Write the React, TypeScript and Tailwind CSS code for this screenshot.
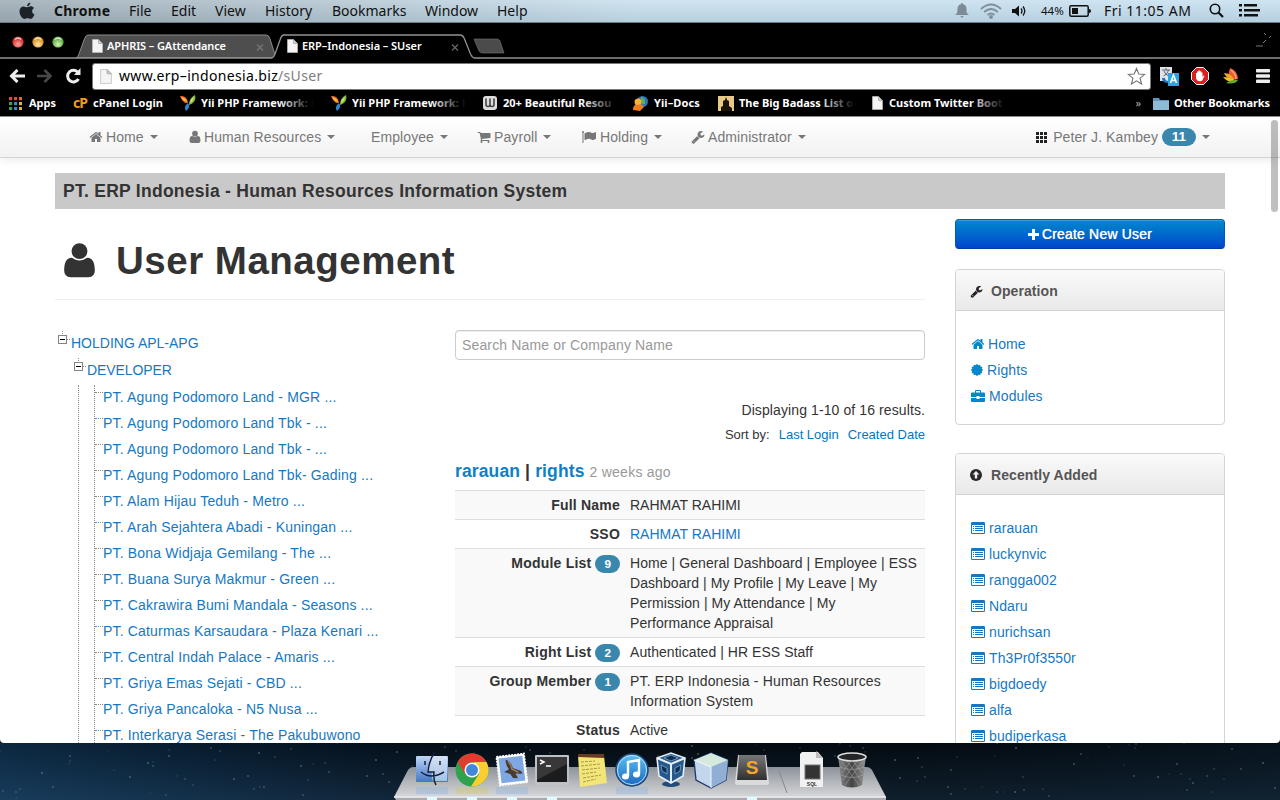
import type { ReactNode } from "react";

const PATHS = {
  home: "M1472 992v480q0 26-19 45t-45 19h-384v-384h-256v384h-384q-26 0-45-19t-19-45v-480q0-1 .5-3t.5-3l575-474 575 474q1 2 1 6zm223-69l-62 74q-8 9-21 11h-3q-13 0-21-7l-692-577-692 577q-12 8-24 7-13-2-21-11l-62-74q-8-10-7-23.5t11-21.5l719-599q32-26 76-26t76 26l244 204v-195q0-14 9-23t23-9h192q14 0 23 9t9 23v408l219 182q10 8 11 21.5t-7 23.5z",
  user: "M896 896Q1060 896 1184 800Q1215 768 1260 768C1500 768 1600 1000 1600 1360Q1600 1664 1310 1664H482Q192 1664 192 1360C192 1000 292 768 532 768Q577 768 608 800Q732 896 896 896zM896 100A365 365 0 0 1 896 830A365 365 0 0 1 896 100z",
  cart: "M704 1536q0 52-38 90t-90 38-90-38-38-90 38-90 90-38 90 38 38 90zm896 0q0 52-38 90t-90 38-90-38-38-90 38-90 90-38 90 38 38 90zm128-1088v512q0 24-16.500 42.500t-40.500 21.500l-1044 122q13 60 13 70 0 16-24 64h920q26 0 45 19t19 45-19 45-45 19h-1024q-26 0-45-19t-19-45q0-11 8-31.500t16-36 21.500-40 15.500-29.500l-177-823h-204q-26 0-45-19t-19-45 19-45 45-19h256q16 0 28.500 6.500t19.500 15.500 13 24.500 8 26 5.500 29.500 4.500 26h1201q26 0 45 19t19 45z",
  wrench: "M448 1472q0-26-19-45t-45-19-45 19-19 45 19 45 45 19 45-19 19-45zm644-420l-682 682q-37 37-90 37-52 0-91-37l-106-108q-38-36-38-90 0-53 38-91l681-681q39 98 114.500 173.500t173.500 114.500zm634-435q0 39-23 106-47 134-164.500 217.500t-258.500 83.500q-185 0-316.500-131.500t-131.500-316.500 131.500-316.500 316.500-131.500q58 0 121.500 16.500t107.500 46.500q16 11 16 28t-16 28l-293 169v224l193 107q5-3 79-48.500t135.500-81 70.500-35.500q15 0 23.500 10t8.500 25z",
  flag: "M256 256q0 72-64 110v1266q0 13-9.500 22.500t-22.500 9.500h-64q-13 0-22.500-9.500t-9.500-22.500v-1266q-64-38-64-110 0-53 37.500-90.500t90.500-37.500 90.500 37.500 37.500 90.500zm1536 64v763q0 25-12.500 38.500t-39.500 27.500q-215 116-369 116-61 0-123.500-22t-108.500-48-115.500-48-142.500-22q-192 0-464 146-17 9-33 9-26 0-45-19t-19-45v-742q0-32 31-55 21-14 79-43 236-120 421-120 107 0 200 29t219 88q38 19 88 19 54 0 117.500-21t110-47 88-47 54.500-21q26 0 45 19t19 45z",
};

function Glyph({ name, className }: { name: keyof typeof PATHS; className: string }) {
  return (
    <svg viewBox="0 0 1792 1792" fill="currentColor" className={`shrink-0 ${className}`}>
      <path d={PATHS[name]} />
    </svg>
  );
}

function ListIcon() {
  return (
    <svg viewBox="0 0 14 12" className="h-3 w-3.5 shrink-0" fill="currentColor">
      <path fillRule="evenodd" d="M1.200 0h11.600Q14 0 14 1.200v9.600Q14 12 12.800 12H1.200Q0 12 0 10.800V1.200Q0 0 1.200 0zM1 3v7.500q0 .5.5.5h11q.5 0 .5-.5V3z" />
      <path d="M2 4h1v1H2zM4 4h8v1H4zM2 6h1v1H2zM4 6h8v1H4zM2 8h1v1H2zM4 8h8v1H4z" />
    </svg>
  );
}

function GearBadge() {
  const points = Array.from({ length: 24 }, (_, i) => {
    const r = i % 2 ? 4.9 : 6.2;
    const a = (i * Math.PI) / 12;
    return `${6 + r * Math.sin(a)},${6 - r * Math.cos(a)}`;
  }).join(" ");
  return (
    <svg viewBox="0 0 12 12" className="h-3 w-3 shrink-0" fill="currentColor">
      <polygon points={points} />
    </svg>
  );
}

function Briefcase() {
  return (
    <svg viewBox="0 0 14 13" className="h-[13px] w-3.5 shrink-0" fill="currentColor">
      <path fillRule="evenodd" d="M4 2.500V1q0-1 1-1h4q1 0 1 1v1.500h3q1 0 1 1V7H8.500V6h-3v1H0V3.500q0-1 1-1zM5 1v1.500h4V1zM0 8h5.500v1h3V8H14v3q0 1-1 1H1q-1 0-1-1z" />
    </svg>
  );
}

function PageIcon({ className }: { className: string }) {
  return (
    <svg viewBox="0 0 11 14" className={`shrink-0 ${className}`}>
      <path d="M.5.5h6l4 4v9H.5z" fill="#f4f4f4" stroke="#bbb" strokeWidth=".7" />
      <path d="M6.500.5v4h4z" fill="#ccc" stroke="#999" strokeWidth=".6" />
    </svg>
  );
}

function Caret() {
  return (
    <svg viewBox="0 0 8 4" className="h-1 w-2 shrink-0" fill="#777">
      <path d="M0 0h8L4 4z" />
    </svg>
  );
}

function Badge({ children }: { children: ReactNode }) {
  return (
    <span className="inline-block rounded-[9px] bg-[#3a87ad] px-[9px] py-[2px] align-baseline text-[11.8px] font-bold leading-[14px] tracking-normal text-white">
      {children}
    </span>
  );
}

function MenuBar() {
  return (
    <div className="relative flex h-[22px] shrink-0 items-center bg-gradient-to-b from-[#dbe5eb] to-[#9fb2bf] text-[14px] leading-[22px] text-[#111]">
      <div className="absolute inset-0 bg-gradient-to-r from-[#8c98a0]/60 via-[#c9e4f4]/60 to-[#c5e3f6]/60" />
      <div className="relative flex w-full items-center border-b border-[#6d7d87] pl-[19px]">
        <svg viewBox="0 0 16 18" className="mr-[19px] h-[18px] w-4" fill="#1d2227">
          <path d="M8.200 5.200c1 0 1.900-.9 3.500-.9 1.300 0 2.500.6 3.300 1.700-2.700 1.700-2.300 5.400.5 6.600-.8 2.200-2.300 4.400-3.800 4.400-1.200 0-1.600-.7-3.100-.7s-2 .7-3.100.7C3.200 17 .5 12.600.5 9.200c0-3.100 2-4.800 4-4.800 1.500 0 2.700.8 3.700.8z" />
          <path d="M8 4.300C7.900 2.500 9.500.8 11.300.6c.2 2-1.500 3.700-3.300 3.700z" />
        </svg>
        <span className="w-[75px] font-bold tracking-[0.25px]">Chrome</span>
        <span className="w-[42px]">File</span>
        <span className="w-[44px]">Edit</span>
        <span className="w-[50px]">View</span>
        <span className="w-[67px]">History</span>
        <span className="w-[93px]">Bookmarks</span>
        <span className="w-[72px]">Window</span>
        <span>Help</span>
        <div className="ml-auto flex items-center pr-[20px]">
          <svg viewBox="0 0 14 15" className="mr-[11px] h-[15px] w-3.5" fill="#7c8b96">
            <path d="M7 0q1 0 1 1.200Q11.500 2 11.500 6c0 4 .5 4.500 2.500 6H0c2-1.500 2.500-2 2.500-6Q2.500 2 6 1.200 6 0 7 0zM5.500 13h3Q8.300 14.500 7 14.500T5.500 13z" />
          </svg>
          <svg viewBox="0 0 22 16" className="mr-[10px] h-4 w-[22px]" fill="none" stroke="#7d8f9b" strokeWidth="1.900">
            <path d="M1 6q10-9 20 0M4.200 9q6.800-6 13.600 0M7.500 12q3.500-3 7 0" />
            <circle cx="11" cy="14" r="1" fill="#7d8f9b" />
          </svg>
          <svg viewBox="0 0 15 12" className="mr-[14px] h-3 w-[15px]" fill="#111">
            <path d="M0 4h3l4-3.500v11L3 8H0z" />
            <path d="M9 3.500q2 2.500 0 5M11 1.500q3.500 4.500 0 9" fill="none" stroke="#111" strokeWidth="1.300" />
          </svg>
          <span className="mr-[4px] w-[24px] text-[11.500px]">44%</span>
          <svg viewBox="0 0 23 12" className="mr-[12px] h-3 w-[23px]">
            <rect x=".8" y=".8" width="18.400" height="10.400" rx="1.500" fill="none" stroke="#111" strokeWidth="1.500" />
            <path d="M3 3h6v6H3zM20 4q2 0 2 2t-2 2z" fill="#111" />
          </svg>
          <span className="w-[88px] text-[14px] tracking-[0.5px] whitespace-nowrap">Fri 11:05 AM</span>
          <svg viewBox="0 0 15 15" className="mr-[15px] ml-[17px] h-[15px] w-[15px]" fill="none" stroke="#111">
            <circle cx="6" cy="6" r="4.700" strokeWidth="1.600" />
            <path d="M9.500 9.500l4.500 4.500" strokeWidth="2.200" />
          </svg>
          <svg viewBox="0 0 21 13" className="h-[13px] w-[21px]" fill="#111">
            <path d="M0 0h3v2.500H0zM5 0h13v2.500H5zM0 5h3v2.500H0zM5 5h16v2.500H5zM0 10h3v2.500H0zM5 10h14v2.500H5z" />
          </svg>
        </div>
      </div>
    </div>
  );
}

function TabStrip() {
  return (
    <div className="relative h-[36px] shrink-0">
      <svg viewBox="0 0 1280 38" className="absolute top-0 left-0 h-[38px] w-full" fill="none">
        <defs>
          <radialGradient id="red" cy=".7"><stop stopColor="#ffa6a0" /><stop offset="1" stopColor="#d8352f" /></radialGradient>
          <radialGradient id="amber" cy=".7"><stop stopColor="#ffe9a8" /><stop offset="1" stopColor="#dc9227" /></radialGradient>
          <radialGradient id="green" cy=".7"><stop stopColor="#d5f7b5" /><stop offset="1" stopColor="#5fae45" /></radialGradient>
        </defs>
        <circle cx="18" cy="20" r="5.600" fill="url(#red)" />
        <circle cx="38" cy="20" r="5.600" fill="url(#amber)" />
        <circle cx="58" cy="20" r="5.600" fill="url(#green)" />
        <path d="M15 17.500q3-3 6 0M35 17.500q3-3 6 0M55 17.500q3-3 6 0" stroke="#fff" strokeOpacity=".75" strokeWidth="1.300" />
        <path d="M76 36q2-1 3-4l5-14q1.500-5 4-5h178q3 0 4 4l6 19z" fill="#4e4e4e" stroke="#8b8b8b" />
        <path d="M0 36h272q2-1 3-4l5-14q1.500-5 4-5h176q3 0 4.500 4l6 15q2 4.500 4 4.500H1280V38H0z" fill="#000" stroke="none" />
        <path d="M0 36h272q2-1 3-4l5-14q1.500-5 4-5h176q3 0 4.500 4l6 15q2 4 4 4H1280" stroke="#929292" strokeWidth="1.300" />
        <path d="M474 17h23q2 0 3 2l4 12h-21q-3 0-4-2z" fill="#4b4b4b" stroke="#777" strokeWidth=".6" />
        <path d="M257 22.500l6 6m0-6l-6 6" stroke="#777" strokeWidth="1.200" />
        <path d="M452 22.500l6 6m0-6l-6 6" stroke="#666" strokeWidth="1.300" />
        <path d="M1256 24h7M1263 21l3-3M1264 11l2 2M1269 16l2-2" stroke="#777" />
      </svg>
      <div className="relative flex items-center pt-[16px] pl-[92px] text-[11px] leading-4 font-semibold text-white">
        <PageIcon className="mr-[4px] h-[14px] w-[11px]" />
        <span className="w-[180px] tracking-[-0.1px]">APHRIS – GAttendance</span>
        <PageIcon className="mr-[4px] h-[14px] w-[11px]" />
        <span className="tracking-[-0.05px]">ERP–Indonesia – SUser</span>
      </div>
    </div>
  );
}

function Toolbar() {
  return (
    <div className="flex h-[35px] shrink-0 items-center pt-[1px] pl-[9px]">
      <svg viewBox="0 0 17 14" className="mr-[10px] h-3.5 w-[17px]" fill="none" stroke="#eee" strokeWidth="3">
        <path d="M16 7H3M8.500 1L2.500 7l6 6" />
      </svg>
      <svg viewBox="0 0 17 14" className="mr-[12px] h-3.5 w-[17px]" fill="none" stroke="#484848" strokeWidth="2.600">
        <path d="M1 7h13M8.500 1l6 6-6 6" />
      </svg>
      <svg viewBox="0 0 16 16" className="mr-[11px] h-4 w-4" fill="none" stroke="#eee" strokeWidth="3">
        <path d="M13 4.500A5.800 5.800 0 1 0 13.500 11" />
        <path d="M15.500 0v7H9z" fill="#eee" stroke="none" />
      </svg>
      <div className="flex h-[27px] w-[1059px] items-center rounded-[3px] border border-[#777] bg-white pr-[4px] pl-[7px]">
        <PageIcon className="mr-[7px] h-[15px] w-[12px]" />
        <span className="text-[14px] leading-5 tracking-[0.33px] text-black">
          www.erp–indonesia.biz<span className="text-[#7d7d7d]">/sUser</span>
        </span>
        <svg viewBox="0 0 20 19" className="ml-auto h-[18px] w-[19px]" fill="#fff" stroke="#777" strokeWidth="1.200">
          <path d="M10 1.500l2.400 5.900 6.300.4-4.900 4 1.600 6.200L10 14.600 4.600 18l1.600-6.200-4.900-4 6.300-.4z" />
        </svg>
      </div>
      <svg viewBox="0 0 19 19" className="ml-[9px] h-[19px] w-[19px]">
        <path d="M0 0h12v14H0z" fill="#dfe3e6" />
        <path d="M2 3h8M6 1v2M3.500 9Q8 7 8.500 3M4 4q1 4 5 5" stroke="#567" fill="none" />
        <path d="M2 11q0 5 6 5v2l4-3-4-3v2q-3 0-3-3z" fill="#1772c2" />
        <path d="M8 6h11v13H8z" fill="#2aa4e4" />
        <path d="M10.500 16l3-8 3 8M11.500 13.500h4" stroke="#fff" strokeWidth="1.600" fill="none" />
      </svg>
      <svg viewBox="0 0 18 18" className="ml-[12px] h-[18px] w-[18px]">
        <path d="M5.500.5h7l5 5v7l-5 5h-7l-5-5v-7z" fill="#d8201c" stroke="#fff" />
        <path d="M5 9V6h1.200v2.500V4.500h1.300V8 3.500h1.300V8 4.200h1.400V8.500 5.500h1.300V10l1-1.500 1 .6-2.300 4.400q-.5.800-2 .8-4.200 0-4.200-4z" fill="#fff" />
      </svg>
      <svg viewBox="0 0 18 17" className="ml-[14px] h-[17px] w-[18px]">
        <path d="M9 12Q4 8 7 0q8 3 8 11z" fill="#ef5a24" />
        <path d="M8 2q5 4 5 9" stroke="#f9a08a" strokeWidth="1.500" fill="none" />
        <path d="M9 12Q3 10 1 5q8 0 10 7z" fill="#f4a12a" />
        <path d="M10 14Q4 14 0 9q7 0 12 4z" fill="#e8c42a" />
        <path d="M3 15q6-4 12-3-3 5-12 3z" fill="#6da52c" />
      </svg>
      <svg viewBox="0 0 14 14" className="ml-[15px] h-3.5 w-3.5" fill="#eee">
        <rect width="14" height="3.600" rx=".8" /><rect y="5.200" width="14" height="3.600" rx=".8" /><rect y="10.400" width="14" height="3.600" rx=".8" />
      </svg>
    </div>
  );
}

function YiiIcon() {
  return (
    <svg viewBox="0 0 16 16" className="mr-[5px] h-4 w-4 shrink-0">
      <path d="M0 1q7-1 8 7Q3 9 0 1z" fill="#ef6a2c" />
      <path d="M1 2q5 1 6 5-4-1-6-5z" fill="#f7c143" />
      <path d="M15 0q2 7-6 10 0-7 6-10z" fill="#7fb93c" />
      <path d="M14 2q-1 5-4 6 0-4 4-6z" fill="#d3e079" />
      <path d="M8 8q3 4-2 8-3-4 2-8z" fill="#2c86cf" />
    </svg>
  );
}

function FadeText({ children, className }: { children: ReactNode; className: string }) {
  return (
    <span className={`relative shrink-0 whitespace-nowrap ${className}`}>
      {children}
      <span className="absolute inset-y-0 right-[-6px] w-[42px] bg-gradient-to-r from-transparent to-black to-85%" />
    </span>
  );
}

function BookmarksBar() {
  const colors = ["#dd4b39", "#dd4b39", "#e06a3a", "#3f9e5c", "#4285c8", "#e5b13a", "#3f9e5c", "#4285c8", "#e5b13a"];
  return (
    <div className="flex h-[24px] shrink-0 items-center border-b border-[#8a8a8a] pb-[3px] pl-[9px] text-[11px] leading-4 font-bold text-white">
      <svg viewBox="0 0 13 13" className="mr-[7px] h-[13px] w-[13px] shrink-0">
        {colors.map((c, i) => <rect key={i} x={(i % 3) * 5} y={Math.floor(i / 3) * 5} width="3.200" height="3.200" fill={c} />)}
      </svg>
      <span className="w-[44px] shrink-0">Apps</span>
      <span className="w-[20px] shrink-0 text-[14px] tracking-[-1px] text-[#f29a1f]">cP</span>
      <span className="w-[87px] shrink-0 tracking-[0.05px] whitespace-nowrap">cPanel Login</span>
      <YiiIcon /><FadeText className="mr-[17px] w-[113px]">Yii PHP Framework: E</FadeText>
      <YiiIcon /><FadeText className="mr-[17px] w-[114px]">Yii PHP Framework: E</FadeText>
      <svg viewBox="0 0 14 14" className="mr-[6px] h-3.5 w-3.5 shrink-0">
        <rect width="14" height="14" rx="3" fill="#ddd" />
        <path d="M3 2.500v6q0 2 2 2t2-2v-6m0 6q0 2 2 2t2-2v-6" stroke="#444" strokeWidth="1.600" fill="none" />
      </svg>
      <FadeText className="mr-[15px] w-[115px]">20+ Beautiful Resou</FadeText>
      <svg viewBox="0 0 15 15" className="mr-[6px] h-[15px] w-[15px] shrink-0">
        <circle cx="9.500" cy="5.500" r="5.500" fill="#2876c4" />
        <path d="M8 1q5 1 4 7-3 1-4-2z" fill="#5fb24b" />
        <circle cx="5" cy="6" r="3.500" fill="#f7b03a" />
        <path d="M0 14q0-6 5-5 4-2 6 2l-4 4z" fill="#ef7c1f" />
      </svg>
      <span className="w-[64px] shrink-0 tracking-[0.1px] whitespace-nowrap">Yii–Docs</span>
      <svg viewBox="0 0 16 15" className="mr-[5px] h-[15px] w-4 shrink-0">
        <rect width="16" height="15" fill="#e9c987" />
        <path d="M3 15v-4l2-1V5l2-1 1-3 1 3 2 1v5l3 2v3z" fill="#1c1408" />
      </svg>
      <FadeText className="mr-[17px] w-[116px]">The Big Badass List o</FadeText>
      <PageIcon className="mr-[6px] h-[14px] w-[11px]" />
      <FadeText className="w-[116px]">Custom Twitter Boot</FadeText>
      <span className="ml-auto mr-[12px] font-normal text-[#aaa]">»</span>
      <svg viewBox="0 0 16 13" className="mr-[5px] h-[13px] w-4 shrink-0">
        <path d="M0 1h6l1 2h9v10H0z" fill="#6296b8" /><path d="M0 4h16v9H0z" fill="#8dbbd6" />
      </svg>
      <span className="mr-[10px] w-[96px] whitespace-nowrap tracking-[-0.1px]">Other Bookmarks</span>
    </div>
  );
}

function NavItem({ icon, label, className }: { icon?: ReactNode; label: string; className: string }) {
  return (
    <div className={`flex shrink-0 items-center whitespace-nowrap ${className}`}>
      {icon}
      <span className="mr-[6px]">{label}</span>
      <Caret />
    </div>
  );
}

function NavBar() {
  return (
    <nav className="relative flex h-[41px] shrink-0 items-center border-b border-[#d4d4d4] bg-gradient-to-b from-white to-[#f2f2f2] pr-[70px] pl-[90px] text-[14px] tracking-[0.09px] text-[#777] shadow-[0_1px_10px_rgba(0,0,0,0.1)]">
      <NavItem className="w-[98px]" label="Home" icon={<Glyph name="home" className="-ml-px mr-[3px] h-3.5 w-3.5" />} />
      <NavItem className="w-[183px]" label="Human Resources" icon={<Glyph name="user" className="mr-[2px] h-3.5 w-3.5" />} />
      <NavItem className="w-[107px]" label="Employee" />
      <NavItem className="w-[104px]" label="Payroll" icon={<Glyph name="cart" className="-ml-px mr-[3px] h-3.5 w-3.5" />} />
      <NavItem className="w-[110px]" label="Holding" icon={<Glyph name="flag" className="mr-[4px] h-3.5 w-3.5" />} />
      <NavItem className="" label="Administrator" icon={<Glyph name="wrench" className="-ml-px mr-[3px] h-3.5 w-3.5" />} />
      <div className="ml-auto flex items-center">
        <svg viewBox="0 0 11 11" className="mr-[6px] h-[11px] w-[11px]" fill="#222">
          {[0, 1, 2, 3, 4, 5, 6, 7, 8].map((i) => <rect key={i} x={(i % 3) * 4} y={Math.floor(i / 3) * 4} width="3" height="3" />)}
        </svg>
        <span className="mr-[4px] whitespace-nowrap">Peter J. Kambey</span>
        <span className="mr-[6px] flex w-[34px] justify-center rounded-full bg-[#3a87ad] py-[2px] text-[13.500px] leading-[14px] font-bold text-white">11</span>
        <Caret />
      </div>
    </nav>
  );
}

const COMPANIES = [
  "PT. Agung Podomoro Land - MGR ...",
  "PT. Agung Podomoro Land Tbk - ...",
  "PT. Agung Podomoro Land Tbk - ...",
  "PT. Agung Podomoro Land Tbk- Gading ...",
  "PT. Alam Hijau Teduh - Metro ...",
  "PT. Arah Sejahtera Abadi - Kuningan ...",
  "PT. Bona Widjaja Gemilang - The ...",
  "PT. Buana Surya Makmur - Green ...",
  "PT. Cakrawira Bumi Mandala - Seasons ...",
  "PT. Caturmas Karsaudara - Plaza Kenari ...",
  "PT. Central Indah Palace - Amaris ...",
  "PT. Griya Emas Sejati - CBD ...",
  "PT. Griya Pancaloka - N5 Nusa ...",
  "PT. Interkarya Serasi - The Pakubuwono",
];

function Toggle() {
  return (
    <svg viewBox="0 0 16 16" className="mt-[3px] h-4 w-4 shrink-0" fill="none" shapeRendering="crispEdges">
      <path d="M7.500 0v4M12 8.500h4" stroke="#888" strokeDasharray="1 1" />
      <rect x="3.500" y="4.500" width="8" height="8" fill="#fff" stroke="#848484" />
      <path d="M5 8.500h5" stroke="#000" />
    </svg>
  );
}

function CompanyTree() {
  return (
    <div className="w-[400px] shrink-0 text-[14px] leading-5 text-[#1678c2]">
      <div className="flex h-[27px] items-start">
        <Toggle />
        <span className="mt-[5px]">HOLDING APL-APG</span>
      </div>
      <div className="pl-4">
        <div className="flex h-[27px] items-start">
          <Toggle />
          <span className="mt-[5px] tracking-[-0.1px]">DEVELOPER</span>
        </div>
        <div className="ml-[7px] border-l border-dotted border-[#888] pl-[15px]">
          <div className="mt-[3px] border-l border-dotted border-[#888] tracking-[0.17px]">
            {COMPANIES.map((name, i) => (
              <div key={i} className="flex h-[26px] items-start">
                <span className="mt-[7px] h-0 w-[8px] border-t border-dotted border-[#888]" />
                <span className="mt-[2px] whitespace-nowrap">{name}</span>
              </div>
            ))}
          </div>
        </div>
      </div>
    </div>
  );
}

function Row({ label, badge, striped, children }: { label: string; badge?: number; striped?: boolean; children: ReactNode }) {
  return (
    <div className={`flex border-t border-[#ddd] py-1 ${striped ? "bg-[#f9f9f9]" : ""}`}>
      <div className="w-[165px] shrink-0 text-right font-bold tracking-[0.2px] whitespace-nowrap">
        {label} {badge !== undefined && <Badge>{badge}</Badge>}
      </div>
      <div className="ml-[10px] w-[290px] shrink-0">{children}</div>
    </div>
  );
}

function UserList() {
  return (
    <div className="w-[470px] text-[14px] leading-5">
      <div className="flex h-[30px] items-center rounded-[4px] border border-[#ccc] px-[6px] tracking-[0.15px] text-[#999] shadow-[inset_0_1px_1px_rgba(0,0,0,0.075)]">
        Search Name or Company Name
      </div>
      <div className="mt-[40px] text-right tracking-[0.1px]">Displaying 1-10 of 16 results.</div>
      <div className="mt-[5px] flex justify-end text-[13px] leading-5 whitespace-nowrap">
        Sort by:
        <span className="ml-[9px] text-[#0078c0]">Last Login</span>
        <span className="ml-[9px] text-[#0078c0]">Created Date</span>
      </div>
      <h4 className="mt-[15px] h-[30px] text-[17.500px] leading-[23px] font-bold tracking-[0.13px] whitespace-nowrap">
        <span className="text-[#0f7fc6]">rarauan</span> | <span className="text-[#0f7fc6]">rights</span>{" "}
        <span className="text-[14px] font-normal tracking-[0.25px] text-[#999]">2 weeks ago</span>
      </h4>
      <Row label="Full Name" striped>RAHMAT RAHIMI</Row>
      <Row label="SSO"><span className="text-[#1678c2]">RAHMAT RAHIMI</span></Row>
      <Row label="Module List" badge={9} striped>
        <span className="tracking-[0.07px]">Home | General Dashboard | Employee | ESS<br />Dashboard | My Profile | My Leave | My<br />Permission | My Attendance | My<br />Performance Appraisal</span>
      </Row>
      <Row label="Right List" badge={2}><span className="tracking-[0.05px]">Authenticated | HR ESS Staff</span></Row>
      <Row label="Group Member" badge={1} striped><span className="tracking-[0.15px]">PT. ERP Indonesia - Human Resources<br />Information System</span></Row>
      <Row label="Status">Active</Row>
    </div>
  );
}

const RECENT = ["rarauan", "luckynvic", "rangga002", "Ndaru", "nurichsan", "Th3Pr0f3550r", "bigdoedy", "alfa", "budiperkasa"];

function Panel({ icon, title, children, className }: { icon: ReactNode; title: string; children: ReactNode; className: string }) {
  return (
    <section className={`rounded-[4px] border border-[#d4d4d4] bg-white ${className}`}>
      <header className="flex h-[41px] items-center rounded-t-[3px] border-b border-[#d4d4d4] bg-gradient-to-b from-[#fafafa] to-[#e9e9e9] pt-[2px] pl-[14px] text-[14px] font-bold tracking-[0.08px] text-[#555]">
        {icon}
        {title}
      </header>
      <div className="pt-[20px] pl-[15px] text-[14px] leading-[26px] tracking-[0.1px] text-[#1678c2]">{children}</div>
    </section>
  );
}

function Sidebar() {
  return (
    <aside className="mt-[10px] w-[270px] shrink-0">
      <div className="flex h-[30px] items-center justify-center gap-[3px] rounded-[4px] border border-[#0259b8] border-b-[#003ba0] bg-gradient-to-b from-[#0088cc] to-[#0044cc] text-[14px] tracking-[0.18px] text-white shadow-[inset_0_1px_0_rgba(255,255,255,0.2)] [text-shadow:0_0_0.7px_#fff]">
        <svg viewBox="0 0 11 11" className="h-[11px] w-[11px]" fill="#fff"><path d="M4 0h3v4h4v3H7v4H4V7H0V4h4z" /></svg>
        Create New User
      </div>
      <Panel className="mt-[20px] h-[156px]" title="Operation" icon={<Glyph name="wrench" className="mr-[8px] h-[13px] w-[13px] text-[#222]" />}>
        <div className="flex items-center gap-[3px]"><Glyph name="home" className="h-3.5 w-3.5 text-[#0088cc]" />Home</div>
        <div className="flex items-center gap-[4px]"><span className="text-[#0088cc]"><GearBadge /></span>Rights</div>
        <div className="flex items-center gap-[4px]"><span className="text-[#0088cc]"><Briefcase /></span>Modules</div>
      </Panel>
      <Panel
        className="mt-[28px] pb-[30px]"
        title="Recently Added"
        icon={
          <svg viewBox="0 0 12 12" className="mr-[9px] h-3 w-3">
            <circle cx="6" cy="6" r="6" fill="#2a2a2a" />
            <path d="M6 2l3.500 3.500H7.200V9.500H4.800V5.500H2.500z" fill="#f2f2f2" />
          </svg>
        }
      >
        {RECENT.map((name) => (
          <div key={name} className="flex items-center gap-[4px]"><ListIcon />{name}</div>
        ))}
      </Panel>
    </aside>
  );
}

function DockIcon({ children }: { children: ReactNode }) {
  return <svg viewBox="0 0 40 40" className="h-10 w-10 shrink-0">{children}</svg>;
}

function Dock() {
  return (
    <div className="relative mx-auto h-[57px] w-[492px]">
      <svg viewBox="0 0 492 57" className="absolute inset-0 h-full w-full">
        <defs>
          <linearGradient id="shelf" x2="0" y2="1"><stop stopColor="#8c929a" /><stop offset=".5" stopColor="#b3b6ba" /><stop offset="1" stopColor="#d5d7da" /></linearGradient>
          <linearGradient id="finder" x2="0" y2="1"><stop stopColor="#bed6f7" /><stop offset="1" stopColor="#4376c7" /></linearGradient>
          <linearGradient id="tunes" x2="0" y2="1"><stop stopColor="#5fc2f4" /><stop offset="1" stopColor="#1767bf" /></linearGradient>
          <linearGradient id="dark" x2="0" y2="1"><stop stopColor="#777" /><stop offset="1" stopColor="#303030" /></linearGradient>
          <linearGradient id="bin"><stop stopColor="#888" /><stop offset=".5" stopColor="#444" /><stop offset="1" stopColor="#999" /></linearGradient>
        </defs>
        <path d="M19 24h454q3 0 5 3l14 27H0l14-27q2-3 5-3z" fill="url(#shelf)" />
        <path d="M0 54h492v3H2z" fill="#a9abaf" /><path d="M0 53.500h492v1.200H0z" fill="#f4f5f6" />
        <path d="M22 44h32v7H22zM102 44h32v7h-32zM222 44h32v7h-32z" fill="#9ab9de" opacity=".5" />
        <path d="M62 44h32v7H62z" fill="#d7c85d" opacity=".35" />
        <path d="M385 28l8 22" stroke="#888" />
        <path d="M33 54h10v3H33zM73 54h10v3H73zM113 54h10v3h-10zM153 54h10v3h-10zM353 54h10v3h-10z" fill="#dffaff" />
      </svg>
      <div className="relative flex pt-[7px] pl-[18px]">
        <DockIcon>
          <rect x="4" y="6" width="32" height="26" rx="1" fill="url(#finder)" />
          <path d="M20 6h15v25H21q-2-5-1-9h-5q1-10 5-16z" fill="#dfe8f3" opacity=".65" />
          <path d="M23 2q-6 8-7 20h6q-1 8 2 13M9 22q10 8 23 0M13 11v4M28 11v4" fill="none" stroke="#132039" strokeWidth="1.500" />
        </DockIcon>
        <DockIcon>
          <circle cx="20" cy="20" r="16.500" fill="#2fa34c" />
          <path d="M5.700 11.800A16.500 16.500 0 0 1 34.300 11.800H20z" fill="#e33b2e" />
          <path d="M5.700 11.800L13 24l7-12.200z" fill="#e33b2e" />
          <path d="M34.500 12A16.500 16.500 0 0 1 19 36.400L27 24l-5-12z" fill="#f8cf2f" />
          <circle cx="20" cy="20" r="7.500" fill="#fff" /><circle cx="20" cy="20" r="6" fill="#4387d9" />
        </DockIcon>
        <DockIcon>
          <g transform="rotate(-7 20 20)">
            <rect x="6" y="5" width="28" height="29" fill="#fff" stroke="#fff" strokeWidth="1.500" strokeDasharray="2 1" />
            <rect x="8" y="7" width="24" height="25" fill="#7ea7e3" />
            <path d="M15 9q5 2 6 9l8 4 1 3-7-1 2 5-5-1-2-4-6-3 5-2q-3-5-2-10z" fill="#483c32" /><path d="M17 11q3 4 3 8l6 4" stroke="#9c8060" strokeWidth="1.500" fill="none" />
          </g>
        </DockIcon>
        <DockIcon>
          <rect x="3" y="5" width="34" height="30" rx="1" fill="#bfc1c3" /><rect x="5" y="7" width="30" height="25" fill="#1b1c1e" />
          <path d="M5 30L35 14V7H5z" fill="#444" opacity=".7" /><path d="M8 10l4 2-4 2M14 16h5" stroke="#fff" strokeWidth="1.500" fill="none" />
        </DockIcon>
        <DockIcon>
          <path d="M6 5l26 1 3 27-27 4z" fill="#f3e678" /><path d="M6 4h26v4L6 7z" fill="#6b3a22" />
          <path d="M9 12l14-1M9 16l19-2M10 20l18-2M10 24l14-2M11 28l18-3M11 32l13-3" stroke="#a8994a" strokeDasharray="3 1" />
        </DockIcon>
        <DockIcon>
          <circle cx="20" cy="20" r="16" fill="url(#tunes)" stroke="#20487c" strokeWidth="1.500" /><circle cx="20" cy="20" r="14.600" fill="none" stroke="#b9e2fb" />
          <path d="M16 26V12l11-2v14" stroke="#fff" strokeWidth="2.400" fill="none" /><ellipse cx="13.500" cy="26.500" rx="3.500" ry="3" fill="#fff" /><ellipse cx="24.500" cy="24.500" rx="3.500" ry="3" fill="#fff" />
        </DockIcon>
        <DockIcon>
          <ellipse cx="19" cy="34" rx="9" ry="3" fill="#234a78" />
          <path d="M5 8l14-5 14 5-2 18-12 7-12-7z" fill="#27588c" stroke="#e4eef7" strokeWidth="1.600" /><path d="M5 8l14 6 14-6M19 14v19" stroke="#e4eef7" strokeWidth="2" fill="none" />
          <path d="M12 8l7-3 7 3-7 3zM9 15l6 3v6l-5-3zM23 18l6-3-1 6-5 3z" fill="#102e50" stroke="#89b8df" strokeWidth=".7" />
        </DockIcon>
        <DockIcon>
          <path d="M2 10l17-7 17 7-2 20-15 8-15-8z" fill="#c2d6ec" stroke="#1f386c" strokeWidth="1.300" />
          <path d="M2 10l17 7 17-7-17-7z" fill="#d5e9dc" /><path d="M19 17l17-7-2 20-15 8z" fill="#91afd4" /><path d="M2 10l17 7v21" stroke="#f3f8fd" fill="none" />
        </DockIcon>
        <DockIcon>
          <path d="M6 5h28l3 28q0 2-3 2H6q-3 0-3-2z" fill="#d9dadb" /><path d="M7 5h26l2 25H5z" fill="url(#dark)" />
          <text x="20" y="24" textAnchor="middle" fontSize="19" fontWeight="bold" fill="#f8a32b" fontFamily="Liberation Sans">S</text>
        </DockIcon>
        <span className="w-[20px] shrink-0" />
        <DockIcon>
          <path d="M10 2h16l5 6v29H8V4z" fill="#f1f1f1" /><path d="M24 1v7h7z" fill="#bbb" /><rect x="13" y="15" width="15" height="14" fill="#333" stroke="#777" />
          <text x="20" y="36" textAnchor="middle" fontSize="5" fontWeight="bold" fill="#333" fontFamily="Liberation Sans">SQL</text>
        </DockIcon>
        <DockIcon>
          <path d="M6 6l4 29q10 5 20 0l4-29z" fill="url(#bin)" /><path d="M10 12l17 23M15 11l14 19M21 11l9 12M30 12L13 35M25 11L11 30M19 11l-9 12M8 17q12 5 24 0M9 25q11 5 22 0" stroke="#bbb" strokeWidth=".6" opacity=".7" fill="none" />
          <ellipse cx="20" cy="7" rx="14" ry="4" fill="#242628" stroke="#ddd" strokeWidth="1.600" />
        </DockIcon>
      </div>
    </div>
  );
}

const STARS = Array.from({ length: 150 }, (_, i) => ({
  x: (i * 227 + ((i * i * 37) % 97)) % 1280,
  y: (i * 31 + ((i * i * 13) % 29)) % 57,
  o: 0.12 + ((i * 7) % 10) / 20,
}));

function Desktop() {
  return (
    <div className="relative h-[57px] shrink-0 bg-gradient-to-b from-[#07131d] to-[#1e3a52]">
      <div className="absolute inset-0 bg-gradient-to-r from-[#12406a]/45 via-black/40 to-[#08131c]/60" />
      <svg viewBox="0 0 1280 57" className="absolute inset-0 h-full w-full" fill="#bcd7e8">
        {STARS.map((s, i) => <circle key={i} cx={s.x} cy={s.y} r=".8" opacity={s.o} />)}
      </svg>
      <Dock />
    </div>
  );
}

export default function App() {
  return (
    <div className="flex h-[800px] w-[1280px] flex-col overflow-hidden bg-black font-['Liberation_Sans',Arial,sans-serif] text-[#333]">
      <div className="shrink-0 font-['Noto_Sans',sans-serif]">
        <MenuBar />
        <TabStrip />
        <Toolbar />
        <BookmarksBar />
      </div>
      <div className="relative flex h-[626px] shrink-0 flex-col overflow-hidden rounded-b-[4px] bg-white">
        <NavBar />
        <div className="absolute top-[3px] right-[2px] h-[92px] w-[7px] rounded-full bg-black/25" />
        <main className="px-[55px] pt-[15px]">
          <div className="flex h-[36px] items-center bg-[#c9c9c9] pt-px pl-[8px] text-[17.500px] font-bold tracking-[0.27px] whitespace-nowrap">
            PT. ERP Indonesia - Human Resources Information System
          </div>
          <div className="flex gap-[30px]">
            <div className="w-[870px] shrink-0">
              <div className="flex h-[91px] items-center border-b border-[#eee] pt-[13px] pl-[5px]">
                <Glyph name="user" className="mr-[17px] h-[39px] w-[39px]" />
                <h1 className="text-[38.500px] leading-[40px] font-bold tracking-[0.5px] whitespace-nowrap">User Management</h1>
              </div>
              <div className="flex">
                <div className="flex pt-[28px]"><CompanyTree /></div>
                <div className="pt-[30px]"><UserList /></div>
              </div>
            </div>
            <Sidebar />
          </div>
        </main>
      </div>
      <Desktop />
    </div>
  );
}
